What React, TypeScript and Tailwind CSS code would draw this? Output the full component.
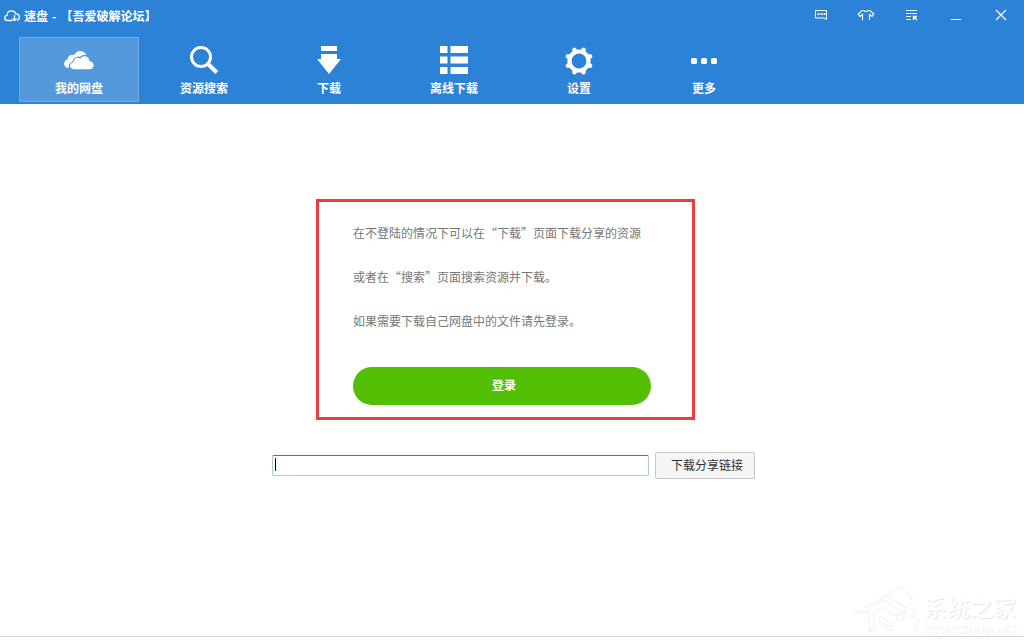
import { useState, type ReactNode } from "react";
import { clsx } from "clsx";

const CloudIcon = () => (
  <svg viewBox="0 0 32 32" className="size-8 fill-white">
    <path d="M5.600 24.200C3 23.800 1.100 22.200 1.100 19.700c0-2.200 1.500-3.900 3.500-4.300.1-2.700 2.200-4.700 4.700-4.700.6 0 1.200.1 1.700.3C12.300 8.500 14.600 6.900 17.200 6.900c2.800 0 5.200 1.600 6.200 4.100-2.400-.7-4.800 0-6.400 1.700-3.700-.8-7.200 1.500-7.600 5.200-2.500.7-4.100 3.200-3.800 6.300z" />
    <path d="M11.200 25.200c-2.400 0-4.100-1.400-4.100-3.400 0-1.800 1.400-3.100 3.400-3.200-.3-2.700 1.600-4.800 4.100-4.800 1 0 1.900.3 2.600.8.9-1.500 2.400-2.400 4.200-2.400 2.900 0 5 2.100 5.100 5 2.400.2 4.200 1.900 4.200 4 0 2.300-1.800 4-4.200 4z" className="stroke-[#5599dd]" strokeWidth="1.400" paintOrder="stroke" />
  </svg>
);

const SearchIcon = () => (
  <svg viewBox="0 0 32 32" className="size-8 fill-none stroke-white">
    <circle cx="13" cy="13" r="9.500" strokeWidth="3" />
    <path d="M19.500 19.500l9.300 9" strokeWidth="4.200" />
  </svg>
);

const DownloadIcon = () => (
  <svg viewBox="0 0 32 32" className="size-8 fill-white">
    <path d="M8 2h16v5H8zM8 10h16v5h4L16 30 4 15h4z" />
  </svg>
);

const ListIcon = () => (
  <svg viewBox="0 0 32 32" className="size-8 fill-white">
    {[2, 12.5, 23].map((y) => (
      <g key={y}>
        <rect x="2" y={y} width="7.500" height="7" />
        <rect x="12.500" y={y} width="17.500" height="7" />
      </g>
    ))}
  </svg>
);

const GearIcon = () => (
  <svg viewBox="0 0 32 32" className="size-8 fill-none stroke-white">
    <circle cx="16" cy="17" r="9.500" strokeWidth="4.200" />
    {[0, 1, 2, 3, 4, 5, 6, 7].map((i) => (
      <path
        key={i}
        d="M16 7V5"
        strokeWidth="4.600"
        strokeLinecap="round"
        transform={`rotate(${22.5 + i * 45} 16 17)`}
      />
    ))}
  </svg>
);

const MoreIcon = () => (
  <svg viewBox="0 0 32 32" className="size-8 fill-white">
    <rect x="3" y="14" width="6" height="6" rx="1.500" />
    <rect x="13" y="14" width="6" height="6" rx="1.500" />
    <rect x="23" y="14" width="6" height="6" rx="1.500" />
  </svg>
);

const tabs: { label: string; icon: ReactNode }[] = [
  { label: "我的网盘", icon: <CloudIcon /> },
  { label: "资源搜索", icon: <SearchIcon /> },
  { label: "下载", icon: <DownloadIcon /> },
  { label: "离线下载", icon: <ListIcon /> },
  { label: "设置", icon: <GearIcon /> },
  { label: "更多", icon: <MoreIcon /> },
];

const windowButtons: { label: string; shape: ReactNode }[] = [
  {
    label: "反馈",
    shape: (
      <>
        <path d="M3.500 4.500h11v9l-2.500-1.500H3.500z" />
        <path d="M5.500 8.200h2m1 0h2m1 0h2" strokeWidth="1.800" />
      </>
    ),
  },
  {
    label: "换肤",
    shape: (
      <path
        d="M5.500 14V8.500L3 10.500 1.200 8l3.800-3.500h2c.8 1.500 3.200 1.500 4 0h2L16.800 8 15 10.500l-2.500-2V14"
        strokeWidth="1.200"
      />
    ),
  },
  {
    label: "菜单",
    shape: (
      <>
        <path d="M4 4.500h11M4 7.500h11M4 10.500h5M4 13.500h5" />
        <path d="M11.500 14v-3.500H15M11.500 10.500L15 14" strokeWidth="1.400" />
      </>
    ),
  },
  { label: "最小化", shape: <path d="M4 13.500h10" /> },
  { label: "关闭", shape: <path d="M4 4l10 10M14 4L4 14" strokeWidth="1.200" /> },
];

function TitleBar() {
  return (
    <div className="flex h-[31px] items-center justify-between pr-px pl-1">
      <div className="flex items-center gap-1 text-white">
        <svg viewBox="0 0 16 12" className="h-3 w-4 fill-none stroke-white" strokeWidth="1.300">
          <path d="M8.500 10.500H3.600C1.900 10.500.7 9.400.7 7.900c0-1.400 1-2.400 2.400-2.600C3.200 2.700 5.100.9 7.500.9c2 0 3.700 1.200 4.300 3 2 .1 3.500 1.500 3.500 3.400 0 1.500-.9 2.700-2.200 3.100" />
          <path d="M10.500 5v5.500M8.500 8.500l2 2 2-2" />
        </svg>
        <h1 className="flex gap-1 text-xs font-bold">
          <span>速盘</span>
          <span>-</span>
          <span>【吾爱破解论坛】</span>
        </h1>
      </div>
      <div className="flex self-start">
        {windowButtons.map((b) => (
          <button
            key={b.label}
            type="button"
            aria-label={b.label}
            className="flex h-[30px] w-[45px] items-center justify-center hover:bg-white/20"
          >
            <svg viewBox="0 0 18 18" className="size-[18px] fill-none stroke-white" strokeWidth="1">
              {b.shape}
            </svg>
          </button>
        ))}
      </div>
    </div>
  );
}

function Watermark() {
  return (
    <div className="flex items-end text-white">
      <svg viewBox="0 0 68 50" className="h-[50px] w-[68px] fill-none stroke-[#f0f0f0]" strokeWidth="1">
        <path d="M0 24.500h12l2 2H1z" />
        <path d="M10 22L28 11 45 1l12 10v8M21 17l12-7 18 12v6M18 20l12-6 19 13v6M14 24v21h5V27l9-5 12 8M24 30l14 8v4l-14-7zM24 38l14 7M50 20l10 5-4 5 8 4-4 5 4 6M42 28h7v6h-7zM14 46l6-6M30 46l8-3" />
      </svg>
      <div className="flex flex-col text-right">
        <span className="text-[23px] leading-9 font-bold [text-shadow:1px_1px_1px_#e4e4e4]">
          系统之家
        </span>
        <span className="font-['Liberation_Sans',sans-serif] text-[10px] leading-3 font-bold [text-shadow:1px_1px_1px_#ececec]">
          XITONGZHIJIA.NET
        </span>
      </div>
    </div>
  );
}

export default function App() {
  const [active, setActive] = useState(0);
  const [link, setLink] = useState("");
  const [caret, setCaret] = useState(true);

  return (
    <div className="flex min-h-screen flex-col bg-white pb-1 font-['Noto_Sans_CJK_SC','Liberation_Sans',sans-serif] text-xs">
      <header className="bg-[#2b82d6] pb-0.5">
        <TitleBar />
        <nav className="flex gap-[5px] pt-1.5 pl-[19px]">
          {tabs.map((tab, i) => (
            <button
              key={tab.label}
              type="button"
              onClick={() => setActive(i)}
              className={clsx(
                "flex w-[120px] flex-col items-center gap-1 border pt-1.5 pb-[5px] leading-4 font-bold text-white",
                i === active ? "border-[#71abe4] bg-[#5599dd]" : "border-transparent",
              )}
            >
              {tab.icon}
              {tab.label}
            </button>
          ))}
        </nav>
      </header>

      <main className="flex flex-1 flex-col items-center pt-[95px] pl-[3px]">
        <div className="w-full max-w-[483px]">
          {/* Login panel */}
          <section className="ml-11 max-w-[379px] border-3 border-[#e93e40] pt-[9px] pr-[41px] pb-3 pl-[34px] text-[#777]">
            <p className="leading-11 whitespace-nowrap">在不登陆的情况下可以在“下载”页面下载分享的资源</p>
            <p className="leading-11">或者在“搜索”页面搜索资源并下载。</p>
            <p className="leading-11">如果需要下载自己网盘中的文件请先登录。</p>
            <button
              type="button"
              className="mt-6 h-[38px] w-full rounded-full bg-[#52bf05] pb-0.5 pl-1 text-xs font-bold text-white"
            >
              登录
            </button>
          </section>

          {/* Share link */}
          <form className="mt-8 flex items-center gap-1.5" onSubmit={(e) => e.preventDefault()}>
            <div className="relative flex flex-1">
              <input
                type="text"
                aria-label="分享链接"
                value={link}
                onChange={(e) => setLink(e.target.value)}
                onFocus={() => setCaret(false)}
                className="h-[21px] w-full rounded-xs border border-[#a9ccd9] border-t-[#447c94] px-0.5 text-xs outline-none"
              />
              {caret && <span className="pointer-events-none absolute top-[3px] left-[3px] h-[13px] w-px bg-black" />}
            </div>
            <button
              type="submit"
              className="h-[27px] w-[100px] rounded-xs border border-[#c8c8c8] bg-[#f5f5f5] pb-0.5 pl-1 text-xs text-[#333]"
            >
              下载分享链接
            </button>
          </form>
        </div>
      </main>

      <footer className="flex justify-end border-b border-[#d4d4d4] pr-2">
        <Watermark />
      </footer>
    </div>
  );
}
